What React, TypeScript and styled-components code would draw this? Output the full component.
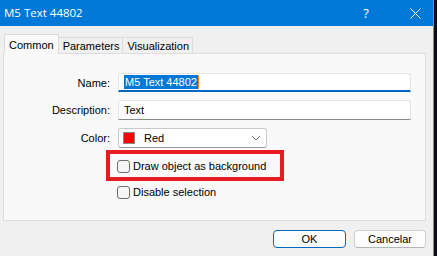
import { createGlobalStyle } from 'styled-components';
import styled from 'styled-components';

const GlobalStyle = createGlobalStyle`
	html, body {
		margin: 0;
		padding: 0;
		background: #0b0f1c;
	}
	body {
		font-family: 'Liberation Sans', Arial, sans-serif;
		font-size: 11px;
		color: #000;
	}
`;

const Dialog = styled.div`
	width: 434px;
	height: 256px;
	background: #f0f0f0;
	border-right: 1px solid #8c8c8c;
	box-sizing: border-box;
	display: flex;
	flex-direction: column;
`;

const TitleBar = styled.div`
	height: 26px;
	background: #0078d7;
	color: #fff;
	display: flex;
	align-items: center;
	padding-left: 4px;
	flex-shrink: 0;
`;

const Title = styled.div`
	flex: 1;
	font-family: 'Open Sans', 'Noto Sans', sans-serif;
	font-size: 11.5px;
	margin-top: -1px;
`;

const TitleButton = styled.div<{ $wide?: boolean }>`
	width: ${(p) => (p.$wide ? '46px' : '36px')};
	height: 26px;
	display: flex;
	align-items: center;
	justify-content: center;
	font-family: 'Open Sans', sans-serif;
	font-size: 13px;
	& + & {
		margin-left: 8px;
	}
`;

const TabBar = styled.div`
	display: flex;
	align-items: flex-end;
	padding: 7px 0 0 4px;
	height: 20px;
	position: relative;
	z-index: 1;
`;

const Tab = styled.div<{ $active?: boolean }>`
	box-sizing: border-box;
	height: ${(p) => (p.$active ? '20px' : '17px')};
	padding: ${(p) => (p.$active ? '1px 4px 0 4px' : '1px 3px 0 4px')};
	background: ${(p) => (p.$active ? '#f9f9f9' : '#f0f0f0')};
	border: 1px solid #dcdcdc;
	border-bottom: ${(p) => (p.$active ? '1px solid #f9f9f9' : '1px solid #dcdcdc')};
	margin-bottom: -1px;
	display: flex;
	align-items: center;
	& + & {
		margin-left: -1px;
	}
`;

const Panel = styled.div`
	margin: 0 7px 0 3px;
	height: 168px;
	box-sizing: border-box;
	background: #f9f9f9;
	border: 1px solid #dcdcdc;
	padding-top: 19px;
`;

const Form = styled.div`
	display: grid;
	grid-template-columns: 106px 293px;
	column-gap: 8px;
	row-gap: 8px;
	align-items: center;
`;

const Label = styled.div`
	text-align: right;
`;

const Field = styled.div<{ $focused?: boolean }>`
	box-sizing: border-box;
	height: ${(p) => (p.$focused ? '19px' : '20px')};
	background: #fff;
	border: 1px solid #e3e3e3;
	border-bottom: ${(p) => (p.$focused ? '2px solid #0067c0' : '1px solid #8a8a8a')};
	border-radius: 3px 3px 0 0;
	display: flex;
	align-items: center;
	padding-left: 5px;
`;

const Selected = styled.span`
	background: #0078d7;
	color: #fff;
	line-height: 14px;
	padding: 0 1px;
	border-right: 1px solid #ff8a00;
`;

const Select = styled.div`
	box-sizing: border-box;
	width: 149px;
	height: 20px;
	background: #fff;
	border: 1px solid #c9c9c9;
	border-bottom-color: #9a9a9a;
	border-radius: 3px;
	display: flex;
	align-items: center;
	padding: 0 5px 0 4px;
	gap: 9px;
`;

const Swatch = styled.div<{ $color: string }>`
	width: 12px;
	height: 12px;
	box-sizing: border-box;
	background: ${(p) => p.$color};
	border: 1px solid #8a8a8a;
`;

const SelectText = styled.div`
	flex: 1;
`;

const CheckRow = styled.div<{ $marked?: boolean }>`
	grid-column: 2;
	display: flex;
	align-items: center;
	gap: 3px;
	height: 14px;
	position: relative;
	margin-top: ${(p) => (p.$marked ? '3px' : '4px')};
	margin-left: -1px;
	${(p) =>
		p.$marked &&
		`
		&::after {
			content: '';
			position: absolute;
			left: -11px;
			top: -9px;
			width: 178px;
			height: 31px;
			box-sizing: border-box;
			border: 4px solid #e81b23;
		}
	`}
`;

const Box = styled.div`
	width: 13px;
	height: 13px;
	box-sizing: border-box;
	border: 1px solid #6e6e6e;
	border-radius: 3px;
	background: #f6f6f6;
`;

const Footer = styled.div`
	display: flex;
	justify-content: flex-end;
	gap: 8px;
	padding: 9px 7px 0 0;
`;

const Button = styled.div<{ $primary?: boolean }>`
	box-sizing: border-box;
	width: ${(p) => (p.$primary ? '73px' : '72px')};
	height: 18px;
	display: flex;
	align-items: center;
	justify-content: center;
	background: #fdfdfd;
	border: 1px solid ${(p) => (p.$primary ? '#0067c0' : '#d0d0d0')};
	border-bottom-color: ${(p) => (p.$primary ? '#0067c0' : '#b5b5b5')};
	border-radius: 4px;
`;

const Chevron = () => (
	<svg width="10" height="6" viewBox="0 0 10 6">
		<path d="M1 1l4 4 4-4" fill="none" stroke="#777" strokeWidth="1" />
	</svg>
);

const CloseIcon = () => (
	<svg width="11" height="11" viewBox="0 0 11 11">
		<path d="M0.5 0.5l10 10M10.5 0.5l-10 10" stroke="#fff" strokeWidth="1" />
	</svg>
);

const App = () => {
	const TABS = ['Common', 'Parameters', 'Visualization'];
	return (
		<>
			<GlobalStyle />
			<Dialog>
				<TitleBar>
					<Title>M5 Text 44802</Title>
					<TitleButton $wide>?</TitleButton>
					<TitleButton>
						<CloseIcon />
					</TitleButton>
				</TitleBar>
				<TabBar>
					{TABS.map((tab, i) => (
						<Tab key={tab} $active={i === 0}>
							{tab}
						</Tab>
					))}
				</TabBar>
				<Panel>
					<Form>
						<Label>Name:</Label>
						<Field $focused>
							<Selected>M5 Text 44802</Selected>
						</Field>
						<Label>Description:</Label>
						<Field>Text</Field>
						<Label>Color:</Label>
						<Select>
							<Swatch $color="#ff0000" />
							<SelectText>Red</SelectText>
							<Chevron />
						</Select>
						<CheckRow $marked>
							<Box />
							Draw object as background
						</CheckRow>
						<CheckRow>
							<Box />
							Disable selection
						</CheckRow>
					</Form>
				</Panel>
				<Footer>
					<Button $primary>OK</Button>
					<Button>Cancelar</Button>
				</Footer>
			</Dialog>
		</>
	);
};

export default App;
